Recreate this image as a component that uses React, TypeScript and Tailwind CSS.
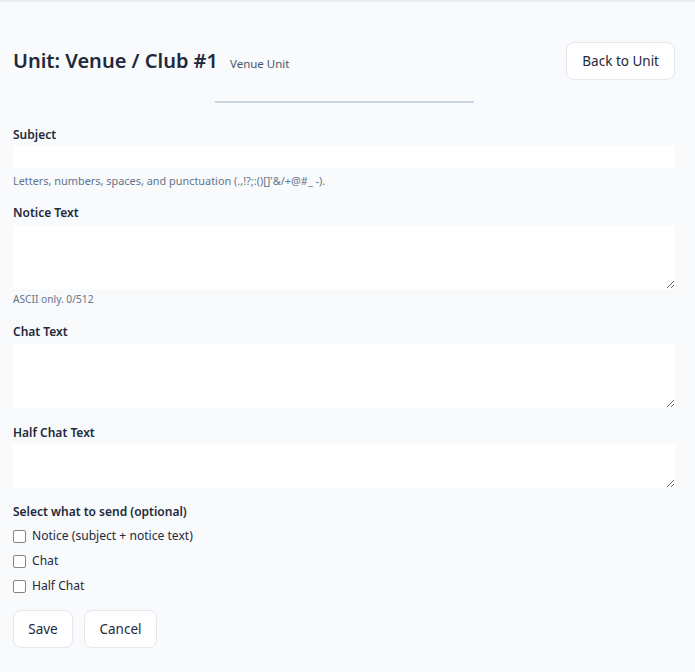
import React, { useState } from 'react';

const font = { fontFamily: '"Noto Sans", "Open Sans", sans-serif' };

const App: React.FC = () => {
  const [subject, setSubject] = useState('');
  const [notice, setNotice] = useState('');
  const [chat, setChat] = useState('');
  const [halfChat, setHalfChat] = useState('');
  const [send, setSend] = useState({ notice: false, chat: false, half: false });

  return (
    <div
      className="min-h-screen bg-[#f8fafc] border-t-2 border-[#eceef1] pl-[13px] pr-[20px] pb-6 text-[#1e293b]"
      style={font}
    >
      {/* header */}
      <div className="flex items-center justify-between pt-[40px]">
        <div className="flex items-baseline gap-[12px]">
          <h1 className="text-[20px] font-semibold leading-[38px] text-[#1e293b]">Unit: Venue / Club #1</h1>
          <span className="text-[11.5px] text-[#475569]">Venue Unit</span>
        </div>
        <button className="h-[38px] px-[15px] bg-white border border-[#e2e8f0] rounded-[8px] text-[13.5px] text-[#1e293b]">
          Back to Unit
        </button>
      </div>

      <div className="flex justify-center mt-[21px]">
        <div className="w-[259px] h-[2px] bg-[#cbd5e1]" />
      </div>

      <form className="flex flex-col mt-[23px]" onSubmit={(e) => e.preventDefault()}>
        <label className="block text-[12px] leading-[18px] font-semibold mb-[2px]">Subject</label>
        <input
          value={subject}
          onChange={(e) => setSubject(e.target.value)}
          className="h-[22px] w-full bg-white outline-none px-2 text-[13px]"
        />
        <p className="text-[10.9px] leading-[16px] text-[#64748b] mt-[5px]">
          Letters, numbers, spaces, and punctuation (.,!?;:()[]'&amp;/+@#_ -).
        </p>

        <label className="block text-[12px] leading-[18px] font-semibold mt-[15px] mb-[3px]">Notice Text</label>
        <textarea
          value={notice}
          onChange={(e) => setNotice(e.target.value)}
          className="h-[64px] w-full bg-white outline-none p-2 text-[13px] block"
        />
        <p className="text-[10.2px] leading-[14px] text-[#64748b] mt-[3px]">ASCII only. {notice.length}/512</p>

        <label className="block text-[12px] leading-[18px] font-semibold mt-[17px] mb-[3px]">Chat Text</label>
        <textarea
          value={chat}
          onChange={(e) => setChat(e.target.value)}
          className="h-[64px] w-full bg-white outline-none p-2 text-[13px] block"
        />

        <label className="block text-[12px] leading-[18px] font-semibold mt-[16px] mb-[2px]">Half Chat Text</label>
        <textarea
          value={halfChat}
          onChange={(e) => setHalfChat(e.target.value)}
          className="h-[44px] w-full bg-white outline-none p-2 text-[13px] block"
        />

        <label className="block text-[12px] leading-[18px] font-semibold mt-[15px]">Select what to send (optional)</label>
        <div className="flex flex-col gap-[7px] mt-[6px]">
          {[
            { key: 'notice', text: 'Notice (subject + notice text)' },
            { key: 'chat', text: 'Chat' },
            { key: 'half', text: 'Half Chat' },
          ].map((o) => (
            <label key={o.key} className="flex items-center gap-[6px] h-[18px] text-[12.1px]">
              <input
                type="checkbox"
                className="w-[13px] h-[13px] m-0 appearance-none bg-white border border-[#858585] rounded-[2px] checked:bg-[#2563eb] checked:border-[#2563eb]"
                checked={send[o.key as keyof typeof send]}
                onChange={(e) => setSend({ ...send, [o.key]: e.target.checked })}
              />
              <span>{o.text}</span>
            </label>
          ))}
        </div>

        <div className="flex gap-[11px] mt-[15px]">
          <button className="h-[38px] w-[60px] bg-white border border-[#e2e8f0] rounded-[8px] text-[13.5px]">Save</button>
          <button className="h-[38px] w-[73px] bg-white border border-[#e2e8f0] rounded-[8px] text-[13.5px]">Cancel</button>
        </div>
      </form>
    </div>
  );
};

export default App;
